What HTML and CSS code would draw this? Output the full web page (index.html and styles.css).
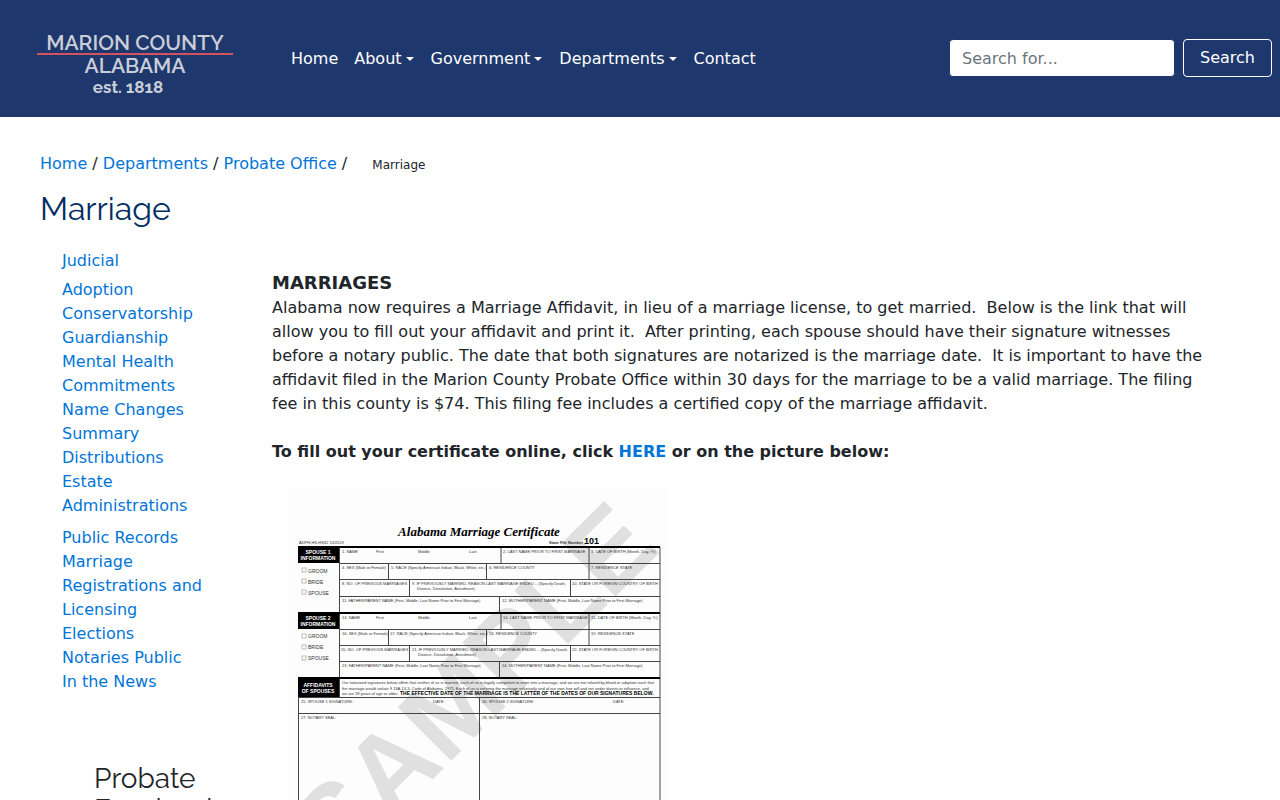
FILE: index.html
```html
<!DOCTYPE html>
<html lang="en">
<head>
  <meta charset="UTF-8">
  <meta name="viewport" content="width=device-width, initial-scale=1.0">
  <title>Marriage - Marion County, Alabama</title>
  <link rel="stylesheet" href="styles.css">
</head>
<body>
  <header class="navbar">
    <a href="#" class="logo" aria-label="Marion County Alabama">
      <svg width="196" height="76" viewBox="0 0 196 76">
        <text class="logo-name" x="98" y="30">MARION COUNTY</text>
        <path d="M0 34H196" stroke="#d0535f" stroke-width="2"/>
        <text class="logo-name" x="98" y="53">ALABAMA</text>
        <text class="logo-est" x="91" y="73">est. 1818</text>
      </svg>
    </a>
    <nav class="nav-links">
      <a href="#">Home</a>
      <a href="#" class="dropdown">About</a>
      <a href="#" class="dropdown">Government</a>
      <a href="#" class="dropdown">Departments</a>
      <a href="#">Contact</a>
    </nav>
    <form class="search">
      <input type="text" placeholder="Search for..." aria-label="Search for">
      <button type="button">Search</button>
    </form>
  </header>

  <div class="page">
    <div class="breadcrumb">
      <a href="#">Home</a> / <a href="#">Departments</a> / <a href="#">Probate Office</a> / <span class="current">Marriage</span>
    </div>
    <h1>Marriage</h1>

    <div class="columns">
      <aside class="sidebar">
        <ul>
          <li><a href="#">Judicial</a></li>
        </ul>
        <ul>
          <li><a href="#">Adoption</a></li>
          <li><a href="#">Conservatorship</a></li>
          <li><a href="#">Guardianship</a></li>
          <li><a href="#">Mental Health Commitments</a></li>
          <li><a href="#">Name Changes</a></li>
          <li><a href="#">Summary Distributions</a></li>
          <li><a href="#">Estate Administrations</a></li>
        </ul>
        <ul>
          <li><a href="#">Public Records</a></li>
          <li><a href="#">Marriage Registrations and Licensing</a></li>
          <li><a href="#">Elections</a></li>
          <li><a href="#">Notaries Public</a></li>
          <li><a href="#">In the News</a></li>
        </ul>
        <h3>Probate Facebook</h3>
      </aside>

      <main class="content">
        <h2>MARRIAGES</h2>
        <p>Alabama now requires a Marriage Affidavit, in lieu of a marriage license, to get married.&nbsp; Below is the link that will allow you to fill out your affidavit and print it.&nbsp; After printing, each spouse should have their signature witnesses before a notary public. The date that both signatures are notarized is the marriage date.&nbsp; It is important to have the affidavit filed in the Marion County Probate Office within 30 days for the marriage to be a valid marriage. The filing fee in this county is $74. This filing fee includes a certified copy of the marriage affidavit.</p>
        <p><strong>To fill out your certificate online, click <a href="#">HERE</a> or on the picture below:</strong></p>

        <a href="#" class="certificate" aria-label="Alabama Marriage Certificate">
          <svg width="380" height="490" viewBox="0 0 380 490">
            <rect width="380" height="490" fill="#fdfdfd"/>
            <text class="watermark" x="50" y="386" transform="rotate(-45 50 386)">SAMPLE</text>

            <text class="cert-title" x="191" y="48">Alabama Marriage Certificate</text>
            <text class="cert-small" x="11" y="56">ADPH-HS-HS62 10/2019</text>
            <text class="cert-small bold" x="261" y="56">State File Number</text>
            <text class="cert-number" x="296" y="56">101</text>

            <!-- form lines -->
            <g fill="none" stroke="#444">
              <path d="M51 75.5H372M51 91.5H372M51 108.5H372M51 141.5H372M51 157.5H372M51 173.5H372M10 209.5H372M10 225.5H372"/>
              <path d="M10.500 189V480M372 59V480M51.500 59V209M191.500 209V480M10 480H372"/>
              <path d="M213 59V75M301 59V91M100.500 75V91M198.500 75V91M121.500 91V108M282.500 91V108M211.500 108V125"/>
              <path d="M213 125V141M301 125V157M100.500 141V157M198.500 141V157M121.500 157V173M282.500 157V173M211.500 173V189"/>
            </g>
            <path d="M10 59H372M10 125H372M10 190H372" stroke="#000" stroke-width="2"/>
            <path d="M10 58H51V75H10ZM10 124H51V141H10ZM10 189H51V209H10Z" fill="#000"/>

            <g class="cert-label">
              <text x="30" y="66">SPOUSE 1</text>
              <text x="30" y="72">INFORMATION</text>
              <text x="30" y="132">SPOUSE 2</text>
              <text x="30" y="138">INFORMATION</text>
              <text x="30" y="199">AFFIDAVITS</text>
              <text x="30" y="205">OF SPOUSES</text>
            </g>

            <g fill="#fff" stroke="#bbb">
              <rect x="14" y="80" width="4" height="4"/>
              <rect x="14" y="91" width="4" height="4"/>
              <rect x="14" y="102" width="4" height="4"/>
              <rect x="14" y="146" width="4" height="4"/>
              <rect x="14" y="157" width="4" height="4"/>
              <rect x="14" y="168" width="4" height="4"/>
            </g>
            <g class="cert-option">
              <text x="20" y="85">GROOM</text>
              <text x="20" y="96">BRIDE</text>
              <text x="20" y="107">SPOUSE</text>
              <text x="20" y="150">GROOM</text>
              <text x="20" y="161">BRIDE</text>
              <text x="20" y="172">SPOUSE</text>
            </g>

            <g class="cert-small">
              <text x="54" y="65">1. NAME</text>
              <text x="88" y="65">First</text>
              <text x="130" y="65">Middle</text>
              <text x="181" y="65">Last</text>
              <text x="215" y="65">2. LAST NAME PRIOR TO FIRST MARRIAGE</text>
              <text x="303" y="65">3. DATE OF BIRTH (Month, Day, Yr)</text>
              <text x="54" y="81">4. SEX (Male or Female)</text>
              <text x="103" y="81">5. RACE (Specify American Indian, Black, White, etc.)</text>
              <text x="201" y="81">6. RESIDENCE COUNTY</text>
              <text x="303" y="81">7. RESIDENCE STATE</text>
              <text x="54" y="97">8. NO. OF PREVIOUS MARRIAGES</text>
              <text x="124" y="97">9. IF PREVIOUSLY MARRIED, REASON LAST MARRIAGE ENDED -- (Specify Death,</text>
              <text x="129" y="102">Divorce, Dissolution, Annulment)</text>
              <text x="284" y="97">10. STATE OR FOREIGN COUNTRY OF BIRTH</text>
              <text x="54" y="114">11. FATHER/PARENT NAME (First, Middle, Last Name Prior to First Marriage)</text>
              <text x="214" y="114">12. MOTHER/PARENT NAME (First, Middle, Last Name Prior to First Marriage)</text>

              <text x="54" y="131">13. NAME</text>
              <text x="88" y="131">First</text>
              <text x="130" y="131">Middle</text>
              <text x="181" y="131">Last</text>
              <text x="215" y="131">14. LAST NAME PRIOR TO FIRST MARRIAGE</text>
              <text x="303" y="131">15. DATE OF BIRTH (Month, Day, Yr)</text>
              <text x="54" y="147">16. SEX (Male or Female)</text>
              <text x="102" y="147">17. RACE (Specify American Indian, Black, White, etc.)</text>
              <text x="201" y="147">18. RESIDENCE COUNTY</text>
              <text x="303" y="147">19. RESIDENCE STATE</text>
              <text x="53" y="163">20. NO. OF PREVIOUS MARRIAGES</text>
              <text x="124" y="163">21. IF PREVIOUSLY MARRIED, REASON LAST MARRIAGE ENDED -- (Specify Death,</text>
              <text x="130" y="168">Divorce, Dissolution, Annulment)</text>
              <text x="284" y="163">22. STATE OR FOREIGN COUNTRY OF BIRTH</text>
              <text x="54" y="179">23. FATHER/PARENT NAME (First, Middle, Last Name Prior to First Marriage)</text>
              <text x="214" y="179">24. MOTHER/PARENT NAME (First, Middle, Last Name Prior to First Marriage)</text>

              <text x="54" y="196">Our notarized signatures below affirm that neither of us is married, each of us is legally competent to enter into a marriage, and we are not related by blood or adoption such that</text>
              <text x="54" y="202">the marriage would violate § 13A-13-3, Code of Alabama, 1975. Each of us is entering the marriage voluntarily and of our own free will and not under duress or influence, and</text>
              <text x="54" y="207">we are 18 years of age or older.</text>
              <text x="13" y="215">25. SPOUSE 1 SIGNATURE:</text>
              <text x="145" y="215">DATE:</text>
              <text x="194" y="215">26. SPOUSE 2 SIGNATURE:</text>
              <text x="325" y="215">DATE:</text>
              <text x="13" y="231">27. NOTARY SEAL:</text>
              <text x="194" y="231">28. NOTARY SEAL:</text>
            </g>
            <text class="cert-effective" x="112" y="207">THE EFFECTIVE DATE OF THE MARRIAGE IS THE LATTER OF THE DATES OF OUR SIGNATURES BELOW.</text>
          </svg>
        </a>
      </main>
    </div>
  </div>
</body>
</html>
```
FILE: styles.css
```css
body {
  margin: 0;
  font-family: "DejaVu Sans", sans-serif;
  font-size: 16px;
  line-height: 24px;
  color: #212529;
  background-color: #fff;
}
a {
  color: #0275d8;
  text-decoration: none;
}
h1, h3 {
  font-family: Raleway, Lato, sans-serif;
  font-weight: 400;
}

/* Header */
.navbar {
  display: flex;
  align-items: center;
  min-height: 116px;
  padding: 0 8px 1px 37px;
  background-color: #1e376d;
}
.logo {
  margin-right: 50px;
}
.logo svg {
  display: block;
}
.logo text {
  font-family: Raleway, Lato, sans-serif;
  fill: #c9ced8;
  text-anchor: middle;
}
.logo-name {
  font-size: 21px;
  font-weight: 600;
}
.logo-est {
  font-size: 17px;
  font-weight: bold;
}
.nav-links {
  display: flex;
}
.nav-links a {
  padding: 9px 8px 7px;
  color: #fff;
}
.dropdown::after {
  content: "";
  display: inline-block;
  margin: 0 1px 0 4px;
  vertical-align: 3px;
  border-top: 4px solid;
  border-left: 4px solid transparent;
  border-right: 4px solid transparent;
}
.search {
  display: flex;
  gap: 8px;
  margin-left: auto;
}
.search input,
.search button {
  box-sizing: border-box;
  height: 38px;
  font: inherit;
  border-radius: 4px;
}
.search input {
  width: 226px;
  padding: 6px 12px;
  border: 1px solid #1e376d;
  background-color: #fff;
}
.search input::placeholder {
  color: #6c757d;
}
.search button {
  padding: 6px 16px;
  color: #fff;
  background-color: transparent;
  border: 1px solid #fff;
}

/* Page */
.page {
  padding: 35px 64px 40px 40px;
}
.current {
  margin-left: 20px;
  font-size: 12px;
}
h1 {
  margin: 14px 0 22px;
  font-size: 32px;
  line-height: 36px;
  color: #002d62;
}
.columns {
  display: grid;
  grid-template-columns: 232px 1fr;
}
.sidebar {
  padding: 0 62px 0 22px;
}
.sidebar ul {
  margin: 0 0 8px;
  padding: 0;
  list-style: none;
}
.sidebar ul:first-child {
  margin-bottom: 5px;
}
.sidebar h3 {
  margin: 69px 0 8px 32px;
  font-size: 28px;
  line-height: 31px;
}
.content {
  padding-top: 20px;
}
.content h2 {
  margin: 0;
  font-size: 18px;
  line-height: 27px;
}
.content p {
  margin: 0 0 24px;
}

/* Certificate */
.certificate {
  display: block;
  margin-left: 16px;
}
.certificate svg {
  display: block;
}
.certificate text {
  font-family: "Liberation Sans", sans-serif;
}
.watermark {
  font-size: 110px;
  font-weight: bold;
  fill: #e0e0e0;
}
.certificate .cert-title {
  font-family: "Liberation Serif", serif;
  font-size: 13px;
  font-weight: bold;
  font-style: italic;
  text-anchor: middle;
}
.cert-small {
  font-size: 4px;
  fill: #333;
}
.bold {
  font-weight: bold;
}
.cert-number {
  font-size: 9px;
  font-weight: bold;
}
.cert-label {
  font-size: 5px;
  font-weight: bold;
  fill: #fff;
  text-anchor: middle;
}
.cert-option {
  font-size: 5px;
  fill: #333;
}
.cert-effective {
  font-size: 5px;
  font-weight: bold;
}
```
